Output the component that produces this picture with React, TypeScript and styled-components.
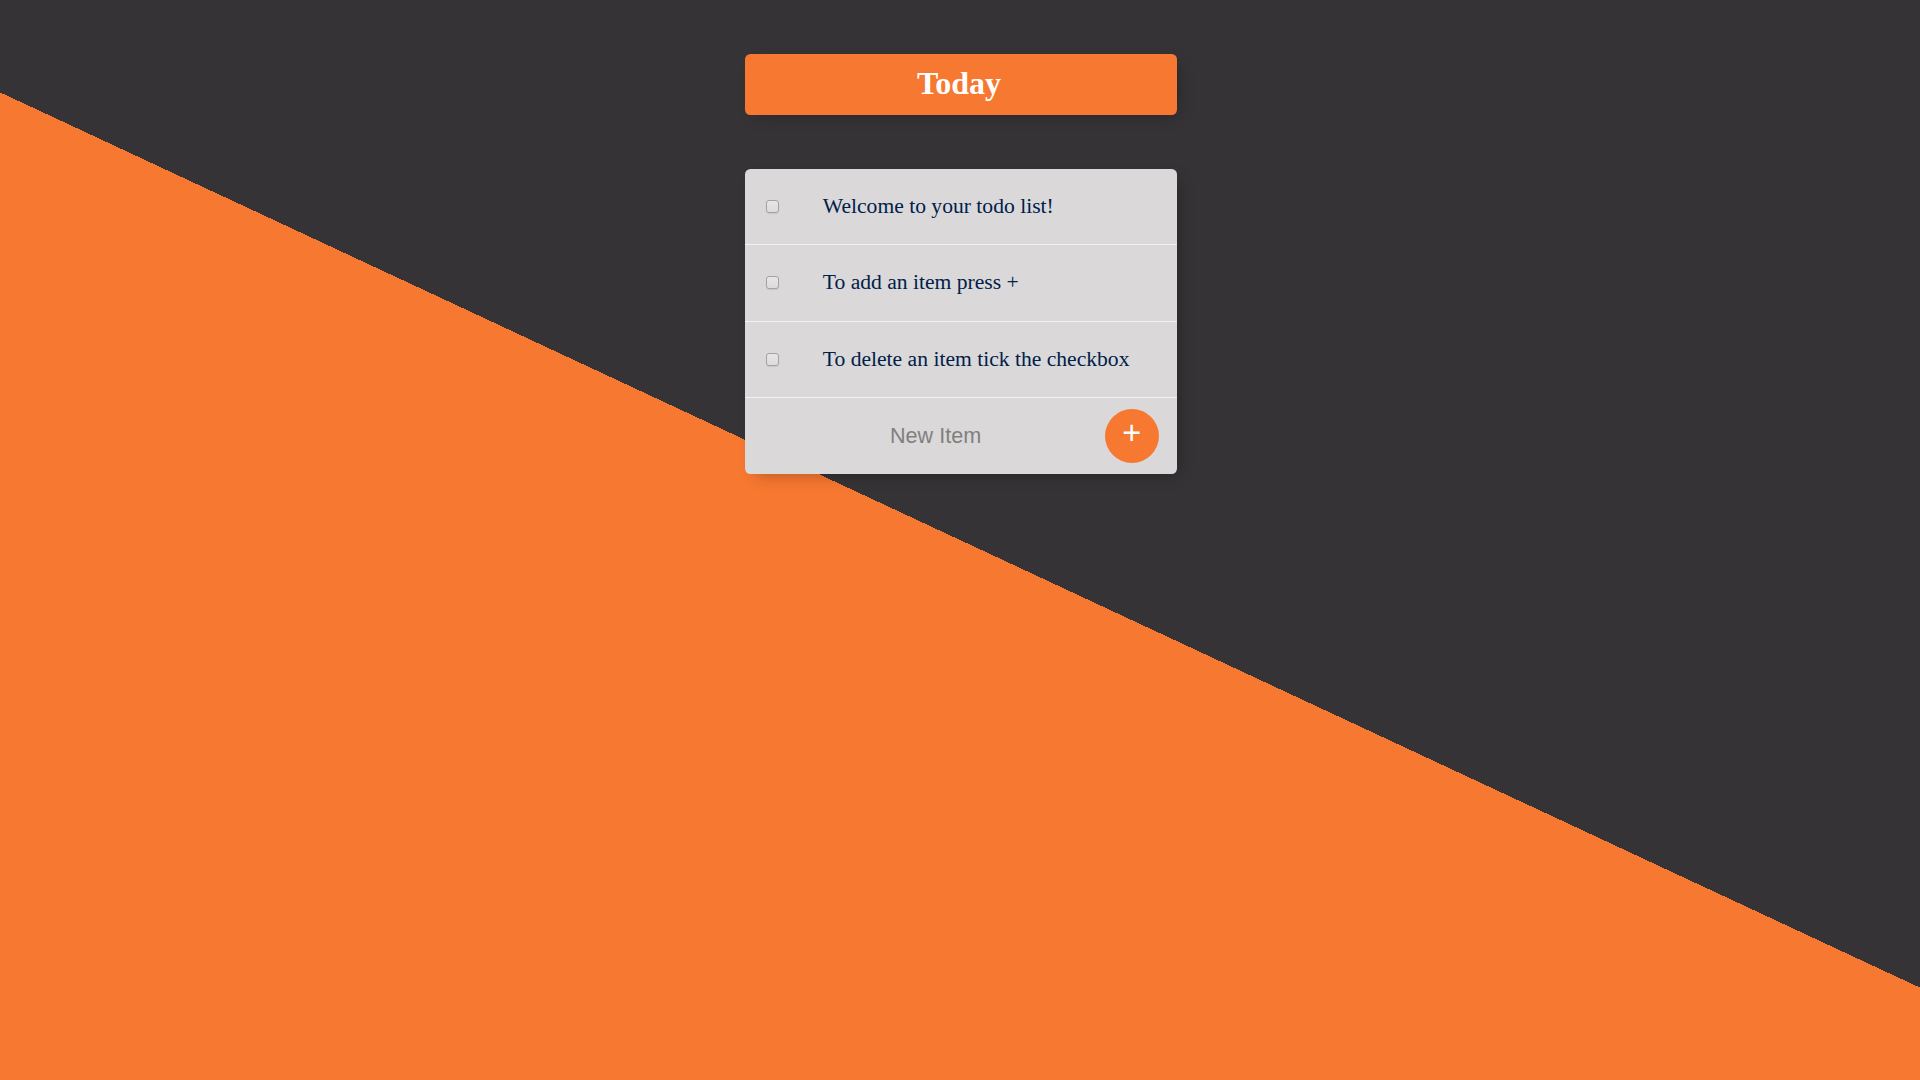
import React from "react";
import styled, { createGlobalStyle } from "styled-components";

const ORANGE = "#f77830";
const DARK = "#353336";

const GlobalStyle = createGlobalStyle`
  html, body {
    margin: 0;
    padding: 0;
  }
  body {
    font-family: "Liberation Serif", serif;
  }
`;

const Page = styled.div`
  min-height: 100vh;
  width: 100%;
  background-image: linear-gradient(25deg, ${ORANGE} 50%, ${DARK} 50%);
  padding: 54px 0 0 2px;
  box-sizing: border-box;
  display: flex;
  flex-direction: column;
  align-items: center;
  gap: 54px;
`;

const Box = styled.div<{ $accent?: boolean }>`
  width: 432px;
  border-radius: 5.4px;
  background: ${(p) => (p.$accent ? ORANGE : "#dad8d9")};
  box-shadow: 5.4px 5.4px 16px -5.4px rgba(0, 0, 0, 0.3);
  overflow: hidden;
`;

const Heading = styled.h1`
  margin: 0;
  height: 60.6px;
  box-sizing: border-box;
  padding: 10.8px 14px 0 10px;
  text-align: center;
  color: #fff;
  font-family: "Liberation Serif", serif;
  font-weight: 700;
  font-size: 32px;
  line-height: normal;
`;

const Item = styled.div`
  min-height: 75.6px;
  display: flex;
  align-items: center;
  border-bottom: 1px solid #f1f1f1;
  &:last-child {
    border-bottom: 0;
  }
`;

const Check = styled.input`
  appearance: none;
  -webkit-appearance: none;
  margin: 21.6px 22.2px 21.6px 21px;
  width: 13px;
  height: 13px;
  flex: none;
  box-sizing: border-box;
  border: 1px solid #a3a3a3;
  border-radius: 3px;
  background: linear-gradient(#e6e6e6, #dcdcdc);
  box-shadow: 0 1px 1px rgba(0, 0, 0, 0.08);
  cursor: pointer;
  &:checked {
    background: ${ORANGE};
    border-color: ${ORANGE};
  }
`;

const Text = styled.p`
  margin: 0;
  padding: 21.6px;
  font-family: "Liberation Serif", serif;
  font-size: 21.6px;
  font-weight: 200;
  color: #00204a;
`;

const Form = styled.form`
  min-height: 75.6px;
  display: flex;
  align-items: center;
  margin-left: 21.6px;
`;

const NewInput = styled.input`
  text-align: center;
  height: 64.8px;
  width: 338px;
  border: none;
  background: transparent;
  font-family: "Liberation Sans", Arial, sans-serif;
  font-size: 21.6px;
  font-weight: 200;
  padding: 0;
  margin: 0;
  color: #222;
  &::placeholder {
    color: grey;
    opacity: 1;
  }
  &:focus {
    outline: none;
  }
`;

const AddButton = styled.button`
  width: 54px;
  height: 54px;
  flex: none;
  border-radius: 50%;
  border: 0;
  background-color: ${ORANGE};
  color: #fff;
  font-family: "Liberation Sans", Arial, sans-serif;
  font-size: 32.4px;
  font-weight: 300;
  line-height: 1;
  padding: 0 0 6.5px;
  margin: 0;
  cursor: pointer;
`;

const items = [
  "Welcome to your todo list!",
  "To add an item press +",
  "To delete an item tick the checkbox",
];

export default function App() {
  return (
    <>
      <GlobalStyle />
      <Page>
        <Box $accent>
          <Heading>Today</Heading>
        </Box>
        <Box>
          {items.map((t) => (
            <Item key={t}>
              <Check type="checkbox" />
              <Text>{t}</Text>
            </Item>
          ))}
          <Form onSubmit={(e) => e.preventDefault()}>
            <NewInput type="text" placeholder="New Item" autoComplete="off" />
            <AddButton type="submit">+</AddButton>
          </Form>
        </Box>
      </Page>
    </>
  );
}
